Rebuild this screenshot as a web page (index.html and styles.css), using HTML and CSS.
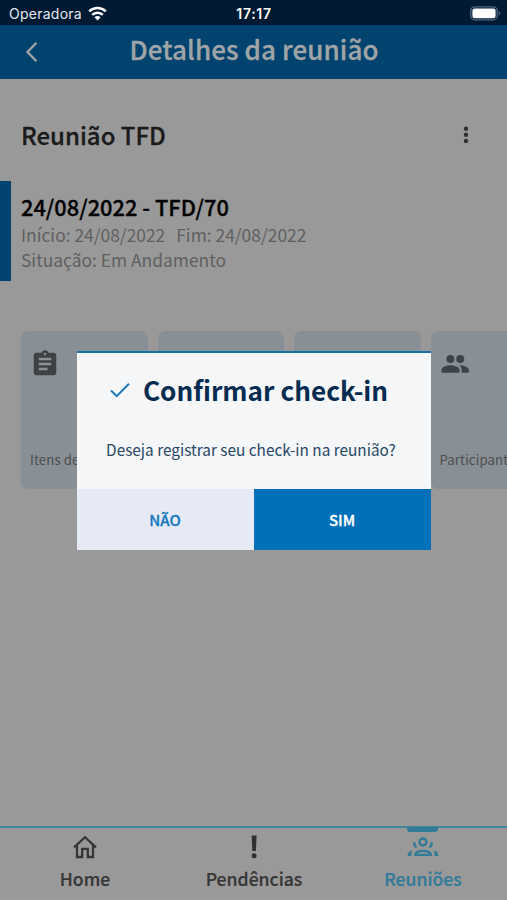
FILE: index.html
```html
<!DOCTYPE html>
<html lang="pt-BR">
<head>
<meta charset="utf-8">
<title>Detalhes da reunião</title>
<link rel="stylesheet" href="styles.css">
</head>
<body>
<div class="screen">
  <div class="status">
    <div class="carrier"><span>Operadora</span>
      <svg width="19" height="15" viewBox="0 0 19 15"><g fill="none" stroke="#fff" stroke-width="2.5"><path d="M1.2 5.4a12 12 0 0 1 16.6 0"/><path d="M4.2 8.8a7.6 7.6 0 0 1 10.6 0"/></g><path fill="#fff" d="M6.5 11.3a4.2 4.2 0 0 1 6 0L9.5 14.4z"/></svg>
    </div>
    <span class="clock">17:17</span>
    <svg class="battery" width="31" height="15" viewBox="0 0 31 15"><rect x=".8" y=".8" width="26.4" height="13" rx="4" fill="none" stroke="#52677d" stroke-width="1.3"/><rect x="2.4" y="2.4" width="23.2" height="9.8" rx="2.5" fill="#fff"/><path d="M28.6 5v4.6q1.6-.7 1.6-2.3T28.6 5z" fill="#52677d"/></svg>
  </div>
  <header class="header">
    <svg class="back" width="14" height="22" viewBox="0 0 14 22"><path d="M12.500 1.8 3.500 11l9 9.2" fill="none" stroke="#a0a5a8" stroke-width="2.3"/></svg>
    <h1>Detalhes da reunião</h1>
  </header>
  <main class="content">
    <div class="heading"><h2>Reunião TFD</h2>
      <svg width="6" height="18" viewBox="0 0 6 18" fill="#303030"><circle cx="3" cy="2.7" r="2.2"/><circle cx="3" cy="8.8" r="2.2"/><circle cx="3" cy="14.9" r="2.2"/></svg>
    </div>
    <section class="meeting">
      <h3>24/08/2022 - TFD/70</h3>
      <p class="dates"><span>Início: 24/08/2022</span><span>Fim: 24/08/2022</span></p>
      <p>Situação: Em Andamento</p>
    </section>
    <div class="cards">
      <div class="card"><svg width="30" height="30" viewBox="0 0 24 24" fill="#3d4144"><path d="M19 3h-4.180C14.400 1.840 13.300 1 12 1s-2.400.84-2.820 2H5c-1.100 0-2 .9-2 2v14c0 1.100.9 2 2 2h14c1.100 0 2-.9 2-2V5c0-1.100-.9-2-2-2zm-7 0c.55 0 1 .45 1 1s-.45 1-1 1-1-.45-1-1 .45-1 1-1zm2 14H7v-2h7v2zm3-4H7v-2h10v2zm0-4H7V7h10v2z"/></svg><span class="label">Itens de pauta</span></div>
      <div class="card"></div>
      <div class="card"></div>
      <div class="card"><svg width="30" height="30" viewBox="0 0 24 24" fill="#3d4346"><circle cx="8.300" cy="8" r="3.200"/><circle cx="16.200" cy="8" r="3.200"/><path d="M1.200 19v-2.400c0-2.500 4.400-3.700 7.200-3.700s7.200 1.200 7.200 3.700V19zM15.600 12.900c3 .1 7.500 1.300 7.500 3.700V19h-5.800v-2.400c0-1.700-.6-2.800-1.700-3.700z"/></svg><span class="label">Participantes</span></div>
    </div>
  </main>
  <nav class="tabs">
    <div class="tab"><svg width="26" height="26" viewBox="0 0 26 26" fill="none" stroke="#363636" stroke-width="2.300"><path d="M2 13.300 13 3.200l11 10.100M5 11v12h5.200v-8.200h5.600V23H21V11"/></svg><span>Home</span></div>
    <div class="tab"><svg width="26" height="26" viewBox="0 0 26 26" fill="#303030"><path d="M10.600 1.500h5l-.7 15.500h-3.600z"/><circle cx="13.100" cy="21.700" r="2.500"/></svg><span>Pendências</span></div>
    <div class="tab active"><svg width="32" height="26" viewBox="0 0 32 26" fill="none" stroke="#317b99" stroke-width="2.400"><circle cx="16" cy="8" r="3.500"/><path d="M8.300 20.900v-.5c0-2.200 3.800-3.500 7.700-3.500s7.700 1.300 7.700 3.500v.5z"/><path fill="#317b99" stroke="none" d="M8.200 7.600a7.500 7.500 0 0 0 2.300 5.800 3 3 0 1 1-2.300-5.800zM23.800 7.600a3 3 0 1 1-2.300 5.800 7.500 7.500 0 0 0 2.300-5.800zM5.500 16.500a6 6 0 0 0-1 5.600H.6c0-3.300 1.700-5.300 4.900-5.600zM26.500 16.500a6 6 0 0 1 1 5.600h3.900c0-3.300-1.700-5.300-4.900-5.600z"/></svg><span>Reuniões</span></div>
  </nav>
  <div class="modal">
    <div class="question">
      <div class="modal-title"><svg width="20" height="17" viewBox="0 0 20 17"><path d="m1 8.500 5.700 5.700L19 1.800" fill="none" stroke="#1878bd" stroke-width="2"/></svg><h2>Confirmar check-in</h2></div>
      <p>Deseja registrar seu check-in na reunião?</p>
    </div>
    <div class="actions"><button class="no">NÃO</button><button class="yes">SIM</button></div>
  </div>
</div>
</body>
</html>
```
FILE: styles.css
```css
* { box-sizing: border-box; }
body { margin: 0; font-family: "Noto Sans CJK SC", "Noto Sans", sans-serif; }
h1, h2, h3, p { margin: 0; white-space: nowrap; }
svg { display: block; flex: none; }
.screen { position: relative; width: 507px; height: 900px; overflow: hidden; display: flex; flex-direction: column; background: #999; }
.status { height: 25px; display: grid; grid-template-columns: 1fr auto 1fr; align-items: center; padding: 2px 6px 0 9px; background: #001a33; color: #fff; font-family: Inter, sans-serif; }
.carrier { display: flex; align-items: center; gap: 6px; font-size: 14px; letter-spacing: .25px; color: #e4e9ee; }
.clock { font-size: 14px; font-weight: 600; letter-spacing: .7px; margin-right: 2px; }
.battery { justify-self: end; }
.header { height: 54px; display: grid; grid-template-columns: 24px 1fr 24px; align-items: center; padding: 0 24px; background: #00436e; }
.header h1 { justify-self: center; font-size: 26px; font-weight: 500; letter-spacing: .1px; line-height: 48px; padding: 0 0 6px 1px; color: #a0a5a8; -webkit-text-stroke: .3px #a0a5a8; }
.content { flex: 1; }
.heading { height: 102px; padding: 10px 38.500px 0 21px; display: flex; align-items: center; justify-content: space-between; }
.heading h2 { font-size: 24px; font-weight: 500; padding-bottom: 2px; color: #1b1b1b; -webkit-text-stroke: .3px #1b1b1b; }
.meeting { height: 100px; padding: 11px 0 0 10px; border-left: 11px solid #00436e; color: #606060; }
.meeting h3 { font-size: 21.800px; line-height: 29px; padding-bottom: 1px; font-weight: 500; color: #000; -webkit-text-stroke: .3px #000; }
.meeting p { font-size: 17.400px; line-height: 25px; }
.dates { display: flex; gap: 11px; }
.cards { display: flex; gap: 10px; margin-top: 50px; padding-left: 21px; }
.card { flex: 0 0 126.500px; height: 158px; padding: 18px 9px; border-radius: 7px; display: flex; flex-direction: column; justify-content: space-between; background: #899095; overflow: hidden; }
.label { font-size: 13.200px; line-height: 22px; letter-spacing: .1px; white-space: nowrap; color: #4b4e50; }
.tabs { height: 74px; display: flex; border-top: 2px solid #42859a; }
.tab { flex: 1; position: relative; display: flex; flex-direction: column; align-items: center; padding-top: 6px; font-size: 17.600px; font-weight: 500; line-height: 37px; color: #363636; -webkit-text-stroke: .2px currentColor; }
.tab span { padding-left: 1px; }
.active { color: #317b99; }
.active::before { content: ""; position: absolute; top: -1px; width: 31px; height: 5px; border-radius: 0 0 3px 3px; background: #317b99; }
.modal { position: absolute; left: 77px; top: 351px; width: 354px; height: 199px; display: flex; flex-direction: column; border-top: 2px solid #1471ad; background: #f5f6f7; }
.question { height: 136px; display: flex; flex-direction: column; align-items: center; }
.modal-title { display: flex; align-items: center; gap: 13px; height: 75px; margin-right: 10px; }
.modal-title h2 { font-size: 26.200px; font-weight: 700; line-height: 36px; padding-bottom: 2px; color: #052b50; }
.question p { margin-right: 6px; font-size: 15.350px; line-height: 43px; color: #284765; }
.actions { flex: 1; display: flex; }
.actions button { flex: 1; border: 0; padding: 0 1px 0 0; font: 500 15px "Noto Sans CJK SC", sans-serif; -webkit-text-stroke: .3px currentColor; }
.no { background: #e5eaf5; color: #1878bd; }
.yes { background: #0070b9; color: #fff; }
```
